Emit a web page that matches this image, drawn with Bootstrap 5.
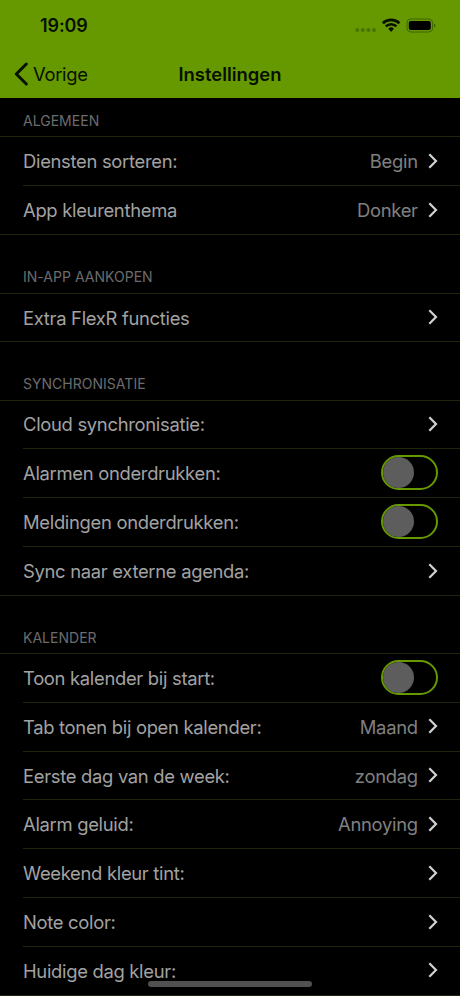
<!DOCTYPE html>
<html lang="nl" data-bs-theme="dark">
<head>
<meta charset="utf-8">
<meta name="viewport" content="width=device-width, initial-scale=1">
<title>Instellingen</title>
<link href="https://cdn.jsdelivr.net/npm/bootstrap@5.3.0/dist/css/bootstrap.min.css" rel="stylesheet">
<style>
  body { background: #000; font-family: Inter, "Liberation Sans", sans-serif; width: 460px; height: 996px; font-size: 18.4px; letter-spacing: -.3px; line-height: 24px; }
  .topbar { background: #669900; color: #071000; height: 98px; }
  .statusbar { height: 50px; padding: 1px 24px 0 40px; }
  .clock { font-size: 18px; font-weight: 600; letter-spacing: -.1px; }
  .titlebar { height: 48px; display: grid; grid-template-columns: 1fr auto 1fr; padding: 0 14px; }
  .page-title { font-size: 18.4px; font-weight: 600; letter-spacing: 0; }
  .line { border-bottom: 1px solid #20260b; }
  .group-title { font-size: 14px; line-height: 18px; letter-spacing: .02px; color: #6c6c6e; padding: 0 23px 6.4px; }
  .g1 { height: 39.3px; } .g2 { height: 58.6px; } .g3 { height: 58.1px; } .g4 { height: 57.9px; }
  .g1, .g4 { padding-bottom: 6px; }
  .setting { height: 48.86px; margin-left: 23px; padding-right: 22px; color: #a2a2a2; }
  .setting:last-child { margin-left: 0; padding-left: 23px; }
  .choice { color: #808080; margin-right: 10.3px; }
  .toggle { width: 57px; height: 35px; border: 2.5px solid #669900; border-radius: 18px; margin-top: -1px; }
  .knob { width: 31px; height: 31px; border-radius: 50%; background: #5d5d5d; }
  .home-bar { width: 164px; height: 6px; border-radius: 3px; background: #515151; left: 148px; top: 981px; }
  svg { display: block; }
  .chev { fill: none; stroke: #d2d2d2; stroke-width: 2.2; margin-top: -1px; }
</style>
</head>
<body class="position-relative overflow-hidden">
<svg width="0" height="0" class="position-absolute"><symbol id="chev" viewBox="0 0 10 16"><path d="M1.3 1.3 8 8 1.3 14.7"/></symbol></svg>
<header class="topbar">
  <div class="statusbar d-flex align-items-center justify-content-between">
    <span class="clock">19:09</span>
    <div class="d-flex align-items-center">
      <svg width="82" height="18" viewBox="0 0 82 18">
        <g fill="#497300"><circle cx="3.2" cy="13" r="2"/><circle cx="8.8" cy="13" r="2"/><circle cx="14.4" cy="13" r="2"/><circle cx="20" cy="13" r="2"/></g>
        <g fill="none" stroke="#071000" stroke-width="2.7" transform="translate(-1.2)"><path d="M30 6.2a12 12 0 0 1 16.6 0"/><path d="M33 9.4a7.6 7.6 0 0 1 10.6 0"/></g>
        <path d="M34.3 11.7a4 4 0 0 1 5.6 0L37.1 14.9z" fill="#071000"/>
        <rect x="53" y="2" width="25.6" height="13" rx="3.8" fill="none" stroke="#3f6500"/>
        <rect x="54.8" y="3.9" width="22" height="9.2" rx="2" fill="#000"/>
        <path d="M80 6.6q1.6.5 1.6 2t-1.6 2z" fill="#3f6500"/>
      </svg>
    </div>
  </div>
  <div class="titlebar align-items-center">
    <div class="d-flex align-items-center gap-1">
      <svg width="15" height="24" viewBox="0 0 15 24" fill="none" stroke="#071000" stroke-width="3" stroke-linecap="round" stroke-linejoin="round"><path d="M12.3 2 2.3 12l10 10"/></svg>
      <span class="back">Vorige</span>
    </div>
    <span class="page-title">Instellingen</span>
  </div>
</header>
<main>
  <section>
    <div class="group-title line g1 d-flex align-items-end">ALGEMEEN</div>
    <div>
      <div class="setting line d-flex align-items-center"><span class="me-auto">Diensten sorteren:</span><span class="choice">Begin</span><svg class="chev" width="10" height="16"><use href="#chev"/></svg></div>
      <div class="setting line d-flex align-items-center"><span class="me-auto">App kleurenthema</span><span class="choice">Donker</span><svg class="chev" width="10" height="16"><use href="#chev"/></svg></div>
    </div>
  </section>
  <section>
    <div class="group-title line g2 d-flex align-items-end">IN-APP AANKOPEN</div>
    <div>
      <div class="setting line d-flex align-items-center"><span class="me-auto">Extra FlexR functies</span><svg class="chev" width="10" height="16"><use href="#chev"/></svg></div>
    </div>
  </section>
  <section>
    <div class="group-title line g3 d-flex align-items-end">SYNCHRONISATIE</div>
    <div>
      <div class="setting line d-flex align-items-center"><span class="me-auto">Cloud synchronisatie:</span><svg class="chev" width="10" height="16"><use href="#chev"/></svg></div>
      <div class="setting line d-flex align-items-center"><span class="me-auto">Alarmen onderdrukken:</span><span class="toggle"><span class="knob d-block"></span></span></div>
      <div class="setting line d-flex align-items-center"><span class="me-auto">Meldingen onderdrukken:</span><span class="toggle"><span class="knob d-block"></span></span></div>
      <div class="setting line d-flex align-items-center"><span class="me-auto">Sync naar externe agenda:</span><svg class="chev" width="10" height="16"><use href="#chev"/></svg></div>
    </div>
  </section>
  <section>
    <div class="group-title line g4 d-flex align-items-end">KALENDER</div>
    <div>
      <div class="setting line d-flex align-items-center"><span class="me-auto">Toon kalender bij start:</span><span class="toggle"><span class="knob d-block"></span></span></div>
      <div class="setting line d-flex align-items-center"><span class="me-auto">Tab tonen bij open kalender:</span><span class="choice">Maand</span><svg class="chev" width="10" height="16"><use href="#chev"/></svg></div>
      <div class="setting line d-flex align-items-center"><span class="me-auto">Eerste dag van de week:</span><span class="choice">zondag</span><svg class="chev" width="10" height="16"><use href="#chev"/></svg></div>
      <div class="setting line d-flex align-items-center"><span class="me-auto">Alarm geluid:</span><span class="choice">Annoying</span><svg class="chev" width="10" height="16"><use href="#chev"/></svg></div>
      <div class="setting line d-flex align-items-center"><span class="me-auto">Weekend kleur tint:</span><svg class="chev" width="10" height="16"><use href="#chev"/></svg></div>
      <div class="setting line d-flex align-items-center"><span class="me-auto">Note color:</span><svg class="chev" width="10" height="16"><use href="#chev"/></svg></div>
      <div class="setting line d-flex align-items-center"><span class="me-auto">Huidige dag kleur:</span><svg class="chev" width="10" height="16"><use href="#chev"/></svg></div>
    </div>
  </section>
</main>
<div class="home-bar position-absolute"></div>
<script src="https://cdn.jsdelivr.net/npm/bootstrap@5.3.0/dist/js/bootstrap.bundle.min.js"></script>
</body>
</html>
